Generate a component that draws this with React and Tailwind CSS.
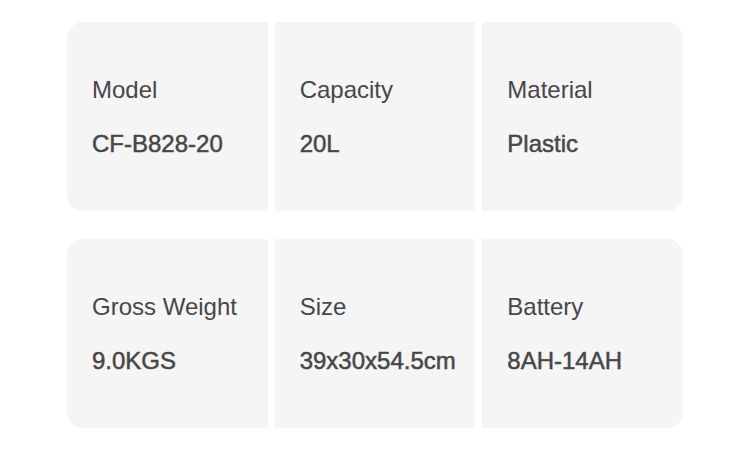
const rows = [
  [
    { label: "Model", value: "CF-B828-20" },
    { label: "Capacity", value: "20L" },
    { label: "Material", value: "Plastic" },
  ],
  [
    { label: "Gross Weight", value: "9.0KGS" },
    { label: "Size", value: "39x30x54.5cm" },
    { label: "Battery", value: "8AH-14AH" },
  ],
];

function Cell({ label, value, pos }) {
  const corners =
    pos === 0 ? "rounded-l-2xl" : pos === 2 ? "rounded-r-2xl" : "";
  return (
    <div
      className={`flex h-[189px] flex-col justify-center gap-[18px] bg-[#f5f5f5] pl-[25px] ${corners}`}
    >
      <div className="text-[24px] leading-[36px] text-[#474747]">{label}</div>
      <div className="text-[24px] leading-[36px] text-[#474747] [-webkit-text-stroke:0.5px_#474747]">
        {value}
      </div>
    </div>
  );
}

export default function App() {
  return (
    <div
      className="h-[474px] w-[750px] bg-white pl-[67px] pt-[22px]"
      style={{ fontFamily: '"Liberation Sans", Arial, sans-serif' }}
    >
      <div className="flex w-[616px] flex-col gap-[28px]">
        {rows.map((row, i) => (
          <div key={i} className="grid grid-cols-3 gap-[7px]">
            {row.map((item, j) => (
              <Cell key={item.label} label={item.label} value={item.value} pos={j} />
            ))}
          </div>
        ))}
      </div>
    </div>
  );
}
